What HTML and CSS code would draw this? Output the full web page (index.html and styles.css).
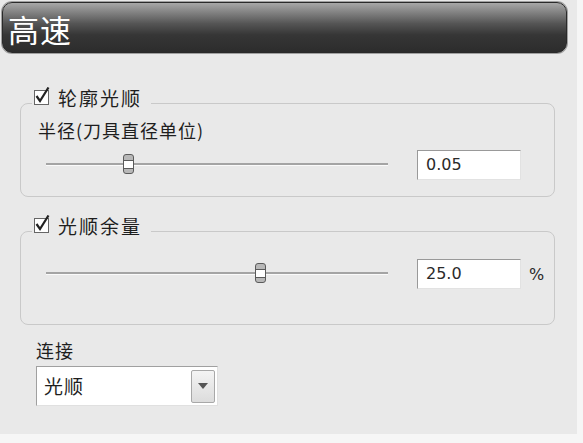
FILE: index.html
```html
<!DOCTYPE html>
<html lang="zh-CN">
<head>
<meta charset="utf-8">
<title>高速</title>
<link rel="stylesheet" href="styles.css">
</head>
<body>
<div class="panel">
  <div class="header">高速</div>

  <fieldset class="group group-one">
    <legend class="legend"><span class="check"><svg viewBox="0 0 18 18" width="18" height="18"><rect x="1.5" y="3.5" width="14" height="14" fill="#fff" stroke="#666" stroke-width="1"/><path d="M3.5 9 L7 14 L15.5 0.5" fill="none" stroke="#222" stroke-width="2.2"/></svg></span>轮廓光顺</legend>
    <div class="field-label">半径(刀具直径单位)</div>
    <div class="row">
      <div class="slider"><div class="track"></div><div class="thumb" style="left: 22.5%"></div></div>
      <div class="input">0.05</div>
    </div>
  </fieldset>

  <fieldset class="group group-two">
    <legend class="legend"><span class="check"><svg viewBox="0 0 18 18" width="18" height="18"><rect x="1.5" y="3.5" width="14" height="14" fill="#fff" stroke="#666" stroke-width="1"/><path d="M3.5 9 L7 14 L15.5 0.5" fill="none" stroke="#222" stroke-width="2.2"/></svg></span>光顺余量</legend>
    <div class="row">
      <div class="slider"><div class="track"></div><div class="thumb" style="left: 61%"></div></div>
      <div class="input">25.0</div>
      <div class="unit">%</div>
    </div>
  </fieldset>

  <div class="links">
    <div class="field-label">连接</div>
    <div class="select">
      <span class="select-text">光顺</span>
      <span class="select-btn"><svg viewBox="0 0 10 6" width="10" height="6"><path d="M0 0 H10 L5 6 Z" fill="#555"/></svg></span>
    </div>
  </div>
</div>
</body>
</html>
```

FILE: styles.css
```css
html, body {
  margin: 0;
  padding: 0;
  background: #f6f6f6;
}

body {
  font-family: "Noto Sans CJK SC", "DejaVu Sans", sans-serif;
  color: #1e1e1e;
}

.panel {
  width: 577px;
  height: 434px;
  background: #e9e9e9;
  box-sizing: border-box;
  padding-top: 2px;
  overflow: hidden;
}

.header {
  margin-left: 2px;
  width: 565px;
  height: 51px;
  box-sizing: border-box;
  border: 1px solid #2a2a2a;
  border-radius: 10px;
  background: linear-gradient(to bottom, #a8a8a8 0%, #8a8a8a 15%, #555 42%, #363636 65%, #2c2c2c 100%);
  box-shadow: 0 0 0 1px #a0a0a0;
  color: #fff;
  font-size: 31px;
  line-height: 52px;
  padding-left: 5px;
  letter-spacing: 1px;
}

.group {
  margin: 0 0 0 20px;
  width: 535px;
  box-sizing: border-box;
  border: 1px solid #c9c9c9;
  border-radius: 8px;
  padding: 2px 0 0 25px;
  min-width: 0;
}

.group-one {
  margin-top: 35px;
  padding-bottom: 16px;
}

.group-two {
  margin-top: 19px;
  padding-top: 13px;
  padding-bottom: 35px;
}

.legend {
  padding: 0 9px 10px 1px;
  margin-left: -14px;
  font-size: 19px;
  line-height: 20px;
  letter-spacing: 2px;
  display: flex;
  align-items: center;
}

.check {
  display: inline-flex;
  width: 18px;
  height: 18px;
  margin-right: 7px;
  margin-top: -4px;
}

.field-label {
  font-size: 18px;
  line-height: 20px;
  margin-left: -8px;
  letter-spacing: 1px;
}

.row {
  display: flex;
  align-items: center;
  height: 30px;
  margin-top: 10px;
}

.group-two .row {
  margin-top: 0;
}

.slider {
  position: relative;
  width: 342px;
  height: 22px;
}

.track {
  position: absolute;
  left: 0;
  right: 0;
  top: 9px;
  height: 2px;
  background: #a4a4a4;
  border-bottom: 1px solid #fafafa;
}

.thumb {
  position: absolute;
  top: 0;
  width: 11px;
  height: 20px;
  box-sizing: border-box;
  border: 1px solid #5a5a5a;
  border-radius: 3px;
  background: linear-gradient(to bottom, #b8b8b8 0, #b8b8b8 5px, #5a5a5a 5px, #5a5a5a 6px, #fff 6px, #fff 13px, #5a5a5a 13px, #5a5a5a 14px, #b8b8b8 14px);
}

.input {
  margin-left: 29px;
  width: 104px;
  height: 30px;
  box-sizing: border-box;
  background: #fff;
  border-top: 1px solid #999;
  border-left: 1px solid #999;
  border-right: 1px solid #e2e2e2;
  border-bottom: 1px solid #e2e2e2;
  font-family: "DejaVu Sans", sans-serif;
  font-size: 16px;
  line-height: 28px;
  padding-left: 8px;
  color: #2a2a2a;
}

.unit {
  margin-left: 8px;
  font-family: "DejaVu Sans", sans-serif;
  font-size: 16px;
  color: #2a2a2a;
}

.links {
  margin: 15px 0 0 36px;
}

.links .field-label {
  margin-left: 0;
}

.select {
  margin-top: 6px;
  width: 182px;
  height: 40px;
  box-sizing: border-box;
  background: #fff;
  border-top: 1px solid #a0a0a0;
  border-left: 1px solid #a0a0a0;
  border-right: 1px solid #e0e0e0;
  border-bottom: 1px solid #e0e0e0;
  display: flex;
  align-items: center;
  justify-content: space-between;
  padding: 0 2px 0 7px;
}

.select-text {
  font-size: 19px;
  line-height: 22px;
  letter-spacing: 1px;
}

.select-btn {
  width: 24px;
  height: 33px;
  box-sizing: border-box;
  border: 1px solid #a8a8a8;
  border-radius: 2px;
  background: linear-gradient(to bottom, #f4f4f4, #dcdcdc);
  display: flex;
  align-items: center;
  justify-content: center;
}
```
